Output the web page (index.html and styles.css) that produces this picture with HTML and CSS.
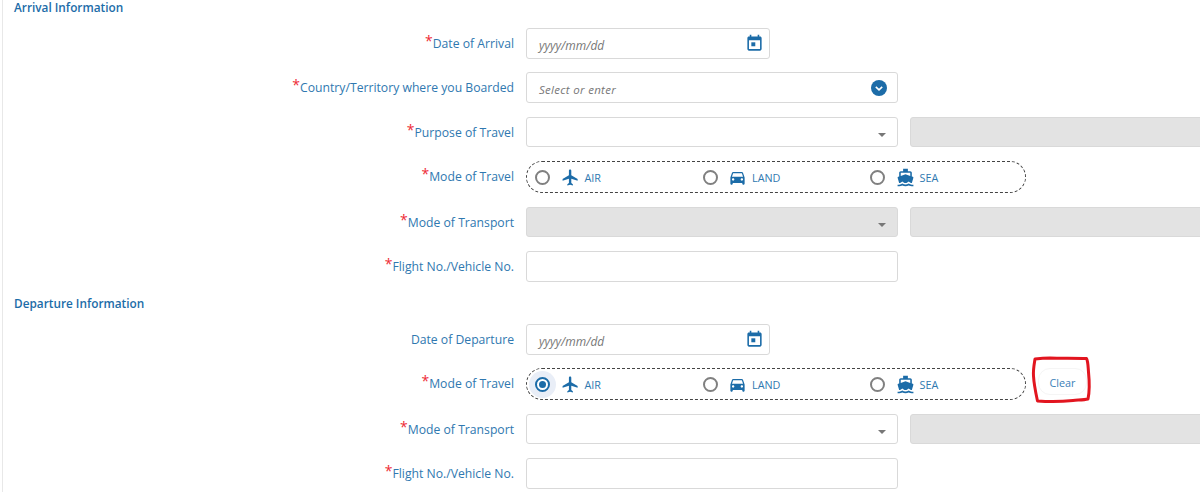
FILE: index.html
```html
<!DOCTYPE html>
<html lang="en">
<head>
<meta charset="utf-8">
<title>Travel Information</title>
<link rel="stylesheet" href="styles.css">
</head>
<body>
<svg width="0" height="0" class="defs" aria-hidden="true">
  <symbol id="i-cal" viewBox="0 0 24 24"><path d="M16 1v2H8V1H6v2H5C3.900 3 3 3.900 3 5v14c0 1.100.9 2 2 2h14c1.100 0 2-.9 2-2V5c0-1.100-.9-2-2-2h-1V1h-2zm3 18H5V8h14v11z"/><rect x="8" y="10.500" width="5" height="5"/></symbol>
  <symbol id="i-air" viewBox="0 0 24 24"><path d="M21 16v-2l-8-5V3.500c0-.83-.67-1.500-1.500-1.500S10 2.670 10 3.500V9l-8 5v2l8-2.500V19l-2 1.500V22l3.500-1 3.500 1v-1.500L13 19v-5.500l8 2.500z"/></symbol>
  <symbol id="i-car" viewBox="0 0 24 24"><path d="M18.920 6.010C18.720 5.420 18.160 5 17.500 5h-11c-.66 0-1.210.42-1.420 1.010L3 12v8c0 .55.45 1 1 1h1c.55 0 1-.45 1-1v-1h12v1c0 .55.45 1 1 1h1c.55 0 1-.45 1-1v-8l-2.080-5.990zM6.500 16c-.83 0-1.500-.67-1.500-1.500S5.670 13 6.500 13s1.500.67 1.500 1.500S7.330 16 6.500 16zm11 0c-.83 0-1.500-.67-1.500-1.500s.67-1.500 1.500-1.500 1.500.67 1.500 1.500-.67 1.500-1.500 1.500zM5 11l1.500-4.500h11L19 11H5z"/></symbol>
  <symbol id="i-sea" viewBox="0 0 24 24"><path d="M20 21c-1.390 0-2.780-.47-4-1.320-2.440 1.710-5.560 1.710-8 0C6.780 20.530 5.390 21 4 21H2v2h2c1.380 0 2.740-.35 4-.99 2.520 1.290 5.480 1.290 8 0 1.260.65 2.620.99 4 .99h2v-2h-2zM3.950 19H4c1.600 0 3.020-.88 4-2 .98 1.120 2.400 2 4 2s3.020-.88 4-2c.98 1.120 2.400 2 4 2h.05l1.890-6.680c.08-.26.06-.54-.06-.78s-.34-.42-.6-.5L20 10.620V6c0-1.100-.9-2-2-2h-3V1H9v3H6c-1.100 0-2 .9-2 2v4.620l-1.290.42c-.26.08-.48.26-.6.5s-.15.52-.06.78L3.950 19zM6 6h12v3.970L12 8 6 9.970V6z"/></symbol>
</svg>
<main class="page">
  <h2 class="heading">Arrival Information</h2>
  <div class="row">
    <label class="label"><span class="req">*</span>Date of Arrival</label>
    <div class="input date"><em>yyyy/mm/dd</em><svg class="cal"><use href="#i-cal"/></svg></div>
  </div>
  <div class="row">
    <label class="label"><span class="req">*</span>Country/Territory where you Boarded</label>
    <div class="input wide"><em class="low">Select or enter</em><span class="chev"><svg viewBox="0 0 16 16"><path d="M4.800 6.800 8 9.800l3.200-3" /></svg></span></div>
  </div>
  <div class="row">
    <label class="label"><span class="req">*</span>Purpose of Travel</label>
    <div class="input wide"><i class="caret"></i></div>
    <div class="input grey extra"></div>
  </div>
  <div class="row tall">
    <label class="label"><span class="req">*</span>Mode of Travel</label>
    <div class="pill">
      <div class="opt"><i class="radio"></i><svg class="ic"><use href="#i-air"/></svg><span>AIR</span></div>
      <div class="opt"><i class="radio"></i><svg class="ic"><use href="#i-car"/></svg><span>LAND</span></div>
      <div class="opt"><i class="radio"></i><svg class="ic"><use href="#i-sea"/></svg><span>SEA</span></div>
    </div>
  </div>
  <div class="row">
    <label class="label"><span class="req">*</span>Mode of Transport</label>
    <div class="input wide grey"><i class="caret"></i></div>
    <div class="input grey extra"></div>
  </div>
  <div class="row">
    <label class="label"><span class="req">*</span>Flight No./Vehicle No.</label>
    <div class="input wide"></div>
  </div>

  <h2 class="heading second">Departure Information</h2>
  <div class="row">
    <label class="label">Date of Departure</label>
    <div class="input date"><em>yyyy/mm/dd</em><svg class="cal"><use href="#i-cal"/></svg></div>
  </div>
  <div class="row tall">
    <label class="label"><span class="req">*</span>Mode of Travel</label>
    <div class="pill">
      <div class="opt"><i class="radio on"></i><svg class="ic"><use href="#i-air"/></svg><span>AIR</span></div>
      <div class="opt"><i class="radio"></i><svg class="ic"><use href="#i-car"/></svg><span>LAND</span></div>
      <div class="opt"><i class="radio"></i><svg class="ic"><use href="#i-sea"/></svg><span>SEA</span></div>
    </div>
    <button class="clear" type="button">Clear</button>
  </div>
  <div class="row">
    <label class="label"><span class="req">*</span>Mode of Transport</label>
    <div class="input wide"><i class="caret"></i></div>
    <div class="input grey extra"></div>
  </div>
  <div class="row">
    <label class="label"><span class="req">*</span>Flight No./Vehicle No.</label>
    <div class="input wide"></div>
  </div>
  <svg class="scribble" viewBox="0 0 62 50" width="62" height="50"><path d="M5 3C4 9 3 14 3.500 20 4 29 6 38 7.500 45 20 46 34 45.500 43 44.500 48 44 54 44 58 43 59.500 36 59.500 26 58.500 16 58 10 58 5 56.500 2.500 45 2 30 2.500 20 2 14 2 9 2.500 5 3Z"/></svg>
</main>
</body>
</html>
```
FILE: styles.css
```css
* { box-sizing: border-box; }
html, body { margin: 0; padding: 0; background: #fff; }
body { width: 1200px; height: 492px; overflow: hidden; font-family: "Open Sans", "Liberation Sans", sans-serif; color: #2f78b0; }
.defs { position: absolute; }
.page { position: relative; height: 492px; margin-left: 2px; padding: 0 0 0 11px; border-left: 1px solid #e8e8e8; overflow: hidden; }
.heading { margin: 0 0 13px; height: 15px; font-size: 11.800px; line-height: 14px; font-weight: 600; color: #1c6ca8; }
.heading.second { margin-top: 14px; margin-bottom: 13px; }
.row { display: flex; align-items: flex-start; height: 31px; margin-bottom: 13.400px; }
.row.tall { height: 32px; }
.label { flex: none; align-self: center; width: 500px; margin-right: 12px; padding-top: 1px; text-align: right; font-size: 12.200px; line-height: 18px; white-space: nowrap; }
.tall .label { padding-top: 0; }
.req { color: #ee2b35; font-size: 14px; line-height: 10px; position: relative; top: -2px; }
.input { position: relative; flex: none; height: 30.600px; border: 1px solid #d9d9d9; border-radius: 3px; background: #fff; display: flex; align-items: center; padding-left: 12px; font-size: 12px; color: #777; }
.input em { font-style: italic; position: relative; top: 2px; }
.input em.low { top: 2px; font-size: 11.500px; letter-spacing: .3px; }
.date { width: 244px; }
.wide { width: 372px; }
.grey { background: #e3e3e3; }
.extra { width: 300px; margin-left: 12px; }
.cal { position: absolute; right: 5px; top: 5px; width: 19px; height: 19px; fill: #1c6ca8; }
.chev { position: absolute; right: 10px; top: 7px; width: 16px; height: 16px; border-radius: 50%; background: #1c6ca8; }
.chev svg { display: block; width: 16px; height: 16px; fill: none; stroke: #fff; stroke-width: 1.600; }
.caret { position: absolute; right: 11px; top: 15px; width: 0; height: 0; border-left: 4px solid transparent; border-right: 4px solid transparent; border-top: 4px solid #777; }
.pill { flex: none; width: 500px; height: 32px; border: 1px dashed #444; border-radius: 16px; display: flex; align-items: center; padding-left: 8px; }
.opt { flex: none; width: 167.500px; display: flex; align-items: center; font-size: 10.800px; }
.opt span { margin-left: 5px; }
.radio { position: relative; flex: none; width: 15px; height: 15px; margin-right: 10.500px; border: 2px solid #808080; border-radius: 50%; background: #fff; }
.radio.on { border-color: #1c6ca8; box-shadow: 0 0 0 6px #e9eef7; }
.radio.on::after { content: ""; position: absolute; left: 2px; top: 2px; width: 7px; height: 7px; border-radius: 50%; background: #1c6ca8; }
.ic { flex: none; width: 19px; height: 19px; fill: #1c6ca8; }
.clear { flex: none; align-self: flex-start; width: 49px; height: 27px; margin-left: 12px; padding: 1px 0 0; border: 1px solid #f5f5f5; border-radius: 12px; background: #fff; color: #3a80b8; font: 10.800px "Open Sans", sans-serif; }
.scribble { position: absolute; left: 1027px; top: 356px; fill: none; stroke: #e2151f; stroke-width: 3; stroke-linejoin: round; }
```
